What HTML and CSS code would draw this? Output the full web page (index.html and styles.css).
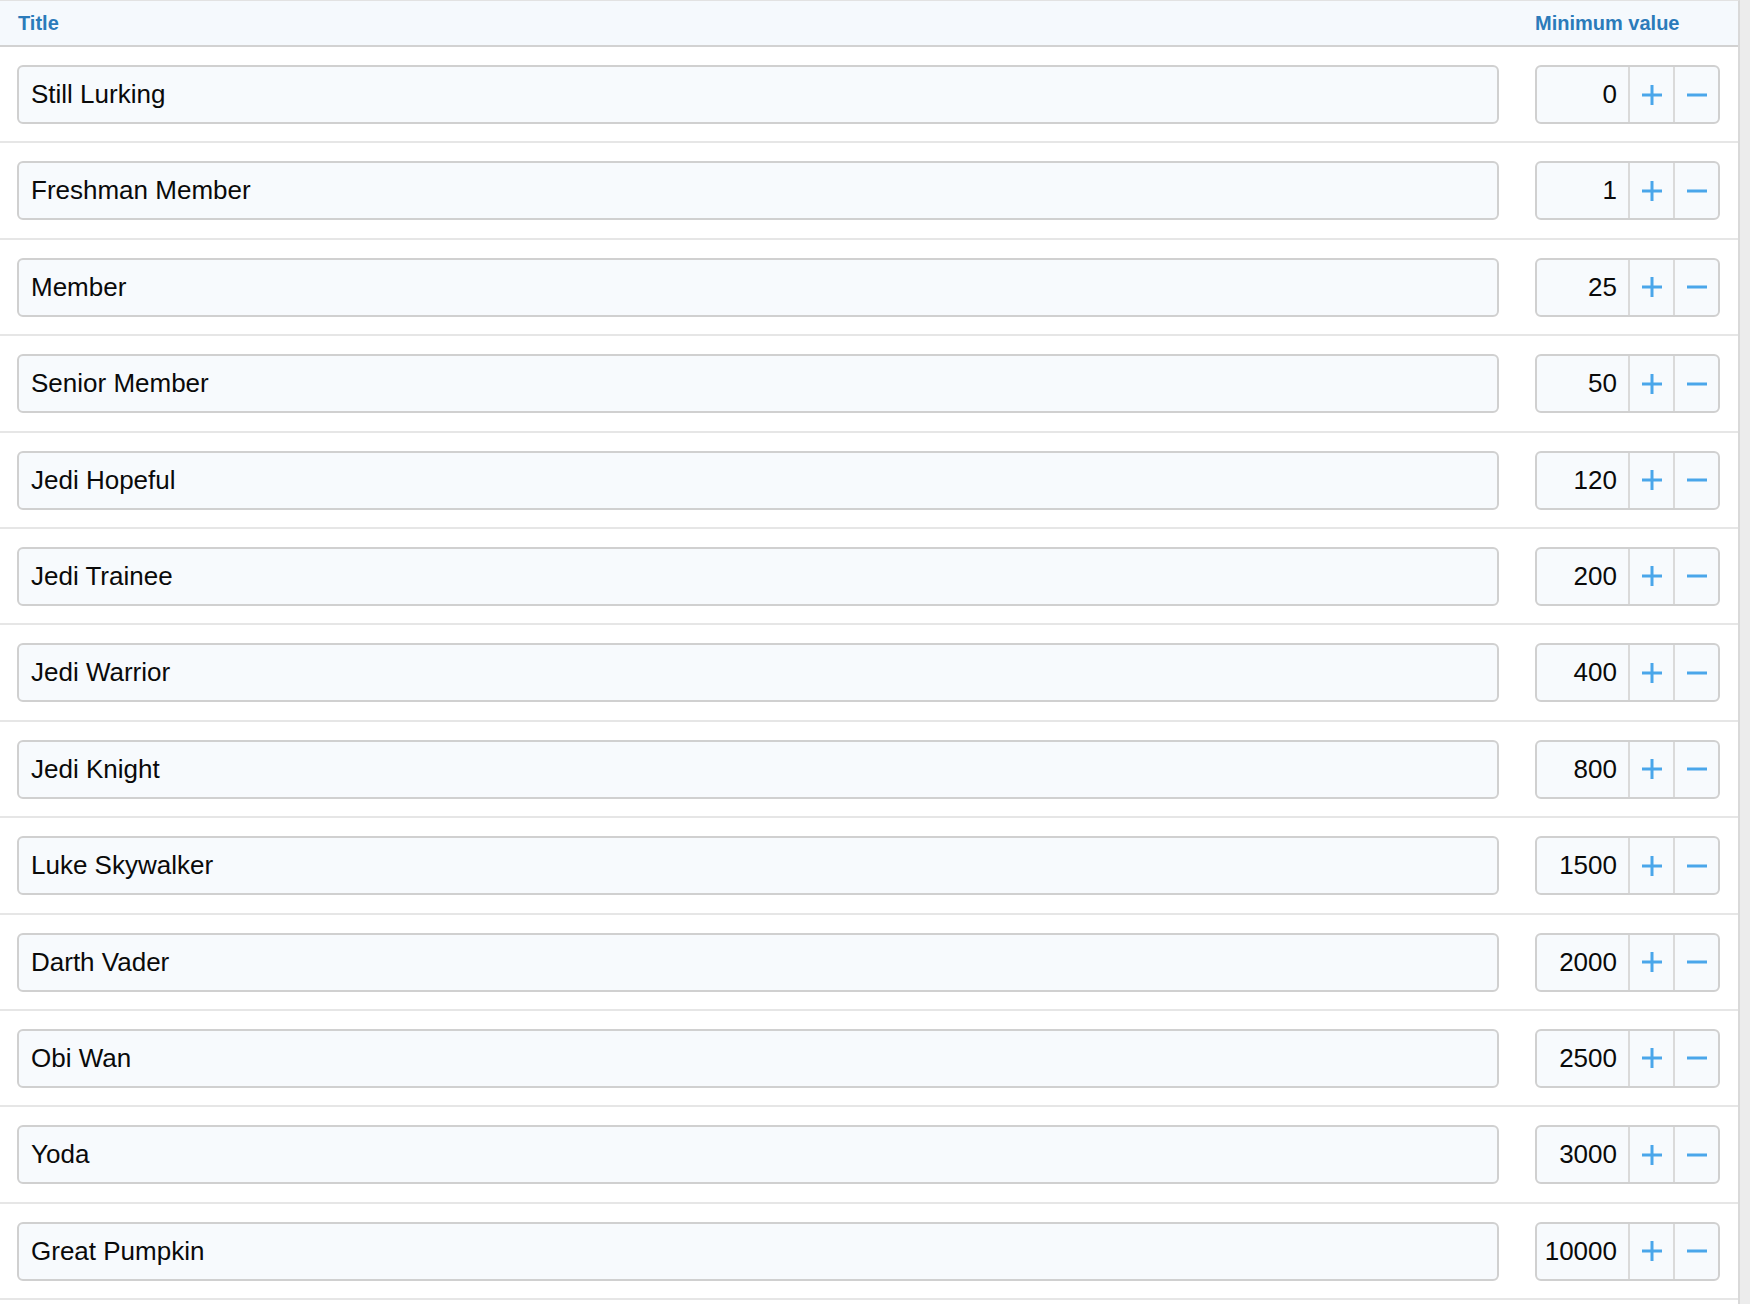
FILE: index.html
```html
<!DOCTYPE html>
<html lang="en">
<head>
    <meta charset="UTF-8">
    <meta name="viewport" content="width=device-width, initial-scale=1.0">
    <title>User Titles</title>
    <link rel="stylesheet" href="styles.css">
</head>
<body>
    <div class="panel">
        <div class="head">
            <div class="col-title">Title</div>
            <div class="col-min">Minimum value</div>
        </div>
        <div class="rows" id="rows"></div>
    </div>

    <script>
        const titles = [
            ['Still Lurking', 0],
            ['Freshman Member', 1],
            ['Member', 25],
            ['Senior Member', 50],
            ['Jedi Hopeful', 120],
            ['Jedi Trainee', 200],
            ['Jedi Warrior', 400],
            ['Jedi Knight', 800],
            ['Luke Skywalker', 1500],
            ['Darth Vader', 2000],
            ['Obi Wan', 2500],
            ['Yoda', 3000],
            ['Great Pumpkin', 10000]
        ];

        const plus = '<svg width="20" height="20" viewBox="0 0 20 20"><path d="M10 0v20M0 10h20"/></svg>';
        const minus = '<svg width="20" height="20" viewBox="0 0 20 20"><path d="M0 10h20"/></svg>';

        function buildRows() {
            const rows = document.getElementById('rows');
            titles.forEach(function (t) {
                const row = document.createElement('div');
                row.className = 'row';
                row.innerHTML =
                    '<input class="title-input" type="text" value="' + t[0] + '">' +
                    '<div class="spinner">' +
                        '<input class="num" type="text" value="' + t[1] + '">' +
                        '<button class="step" onclick="step(this, 1)">' + plus + '</button>' +
                        '<button class="step" onclick="step(this, -1)">' + minus + '</button>' +
                    '</div>';
                rows.appendChild(row);
            });
        }

        function step(btn, dir) {
            const input = btn.parentNode.querySelector('.num');
            const value = Math.max(0, (parseInt(input.value, 10) || 0) + dir);
            input.value = value;
        }

        buildRows();
    </script>
</body>
</html>
```

FILE: styles.css
```css
body {
    margin: 0;
    background: #ececec;
    font-family: "Liberation Sans", Arial, sans-serif;
}
.panel {
    box-sizing: border-box;
    width: 1740px;
    min-height: 100vh;
    background: #fff;
    border-top: 1px solid #e2e2e2;
    border-right: 2px solid #d9d9d9;
}
.head {
    display: flex;
    gap: 36px;
    align-items: center;
    height: 44px;
    padding: 0 18px;
    background: #f5f9fd;
    border-bottom: 2px solid #d2d2d2;
    font-size: 20px;
    font-weight: bold;
    color: #2b7bba;
}
.head .col-title {
    flex: 1;
}
.head .col-min {
    width: 185px;
}
.row {
    display: flex;
    gap: 36px;
    padding: 18px 18px 17.4px 17px;
    border-bottom: 2px solid #e6e6e6;
}
.title-input, .num {
    font-family: "Liberation Sans", Arial, sans-serif;
    font-size: 26px;
    color: #0a0a0a;
    outline: none;
}
.title-input {
    flex: 1;
    box-sizing: border-box;
    height: 59px;
    padding: 0 12px;
    border: 2px solid #d0d0d0;
    border-radius: 6px;
    background: #f7fafd;
}
.spinner {
    display: flex;
    box-sizing: border-box;
    width: 185px;
    height: 59px;
    border: 2px solid #d0d0d0;
    border-radius: 6px;
    background: #f7fafd;
    overflow: hidden;
}
.num {
    box-sizing: border-box;
    width: 93px;
    padding: 0 11px 0 0;
    border: 0;
    border-right: 2px solid #dadada;
    background: transparent;
    text-align: right;
}
.step {
    display: flex;
    align-items: center;
    justify-content: center;
    width: 45px;
    padding: 0;
    border: 0;
    border-right: 2px solid #dadada;
    background: transparent;
    cursor: pointer;
}
.step:last-child {
    border-right: 0;
    flex: 1;
}
.step svg {
    stroke: #4aa6ea;
    stroke-width: 3;
    fill: none;
}
```
